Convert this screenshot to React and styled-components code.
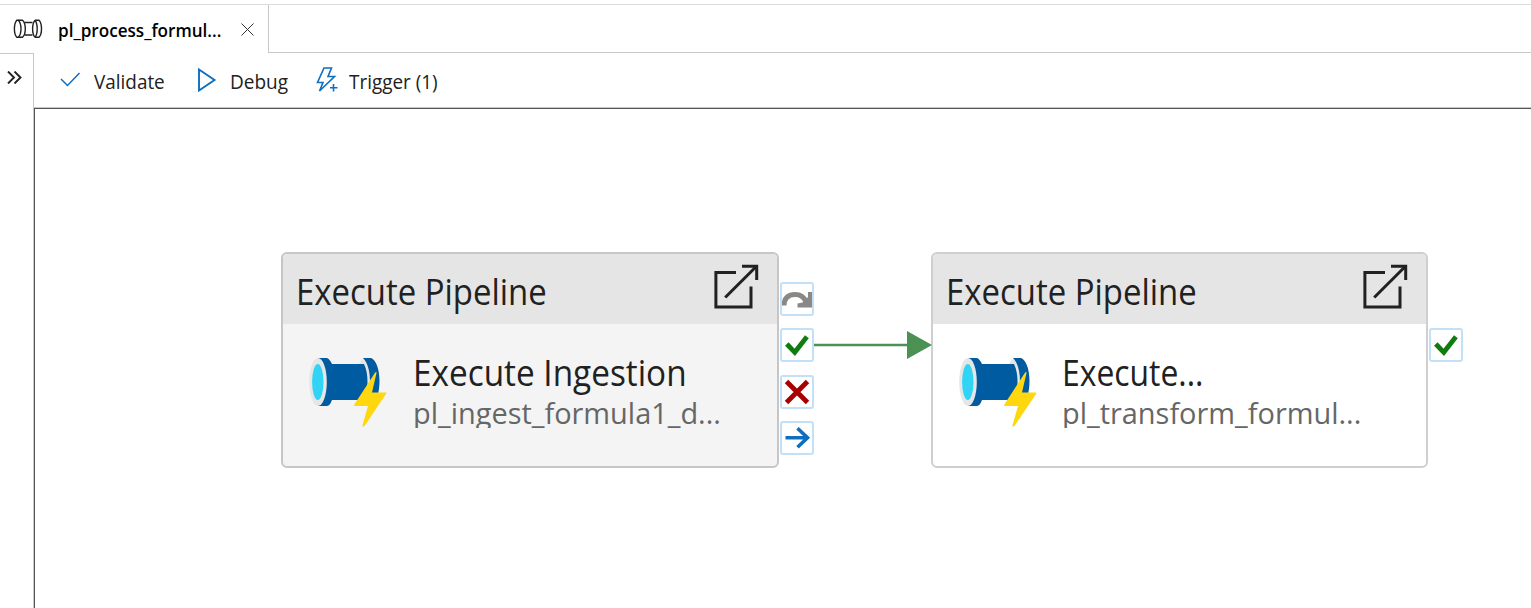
import React from 'react';
import styled, { createGlobalStyle } from 'styled-components';

const Global = createGlobalStyle`
  *, *::before, *::after { box-sizing: border-box; }
  body { margin: 0; background: #fff; overflow: hidden; }
  svg { display: block; }
`;

const Shell = styled.div`
  display: flex;
  flex-direction: column;
  width: 100%;
  height: 608px;
  padding-top: 4px;
  background: #fff;
  color: #212121;
  font-family: 'Open Sans', 'Noto Sans', sans-serif;
`;

const TabBar = styled.div`
  display: flex;
  flex: none;
  height: 49px;
  border-top: 1px solid #dcdcdc;
`;

const Tab = styled.div`
  display: flex;
  align-items: center;
  width: 269px;
  padding-left: 13px;
  border-right: 1px solid #c8c8c8;
`;

const TabFill = styled.div`
  flex: 1;
  border-bottom: 1px solid #c8c8c8;
`;

const Label = styled.span`
  display: block;
  white-space: nowrap;
  font-size: ${(p) => p.$size}px;
  line-height: ${(p) => p.$line || p.$size * 1.3}px;
  font-weight: ${(p) => p.$weight || 400};
  color: ${(p) => p.$color || '#212121'};
  transform: scaleX(${(p) => p.$condense || 1});
  transform-origin: left center;
`;

const Workspace = styled.div`
  display: flex;
  flex: 1;
  min-height: 0;
`;

const Rail = styled.div`
  width: 34px;
  padding: 17px 0 0 7px;
  border-top: 1px solid #c8c8c8;
  border-right: 1px solid #c8c8c8;
`;

const Editor = styled.div`
  display: flex;
  flex: 1;
  flex-direction: column;
  min-width: 0;
`;

const Toolbar = styled.div`
  display: flex;
  flex: none;
  height: 55px;
  padding-left: 26px;
  padding-bottom: 1px;
  align-items: center;
  border-bottom: 1px solid #c8c8c8;
`;

const Command = styled.div`
  display: flex;
  align-items: center;
  width: ${(p) => p.$width}px;
`;

const CommandIcon = styled.div`
  width: ${(p) => p.$width}px;
`;

const CommandText = styled.div`
  padding-top: 5px;
`;

const Canvas = styled.div`
  position: relative;
  flex: 1;
  border-left: 1px solid #555;
  border-top: 1px solid #555;
  overflow: hidden;
`;

const Node = styled.div`
  position: absolute;
  left: ${(p) => p.$x}px;
  top: 143px;
  width: 497.5px;
  height: 216px;
  display: flex;
  flex-direction: column;
  border: 2px solid ${(p) => (p.$selected ? '#c6c6c6' : '#cfcfcf')};
  border-radius: 6px;
  background: ${(p) => (p.$selected ? '#f4f4f4' : '#fff')};
  overflow: hidden;
`;

const NodeHeader = styled.div`
  display: flex;
  justify-content: space-between;
  flex: none;
  height: 70px;
  padding: 10px 18px 0 13px;
  background: #e5e5e5;
`;

const HeaderText = styled.div`
  padding-top: 2px;
`;

const NodeBody = styled.div`
  display: flex;
  padding: 21px 0 0 17px;
`;

const NodeText = styled.div`
  padding: 5px 0 0 24.5px;
`;

const Clip = styled.div`
  width: 330px;
  height: 32px;
  overflow: hidden;
`;

const Ports = styled.div`
  position: absolute;
  left: ${(p) => p.$x}px;
  top: ${(p) => p.$y}px;
  display: flex;
  flex-direction: column;
  gap: 12.3px;
`;

const Port = styled.div`
  width: 34px;
  height: 34px;
  border: 2px solid #c2e0f8;
  border-radius: 3px;
  background: #fff;
`;

const Link = styled.svg`
  position: absolute;
  left: 778px;
  top: 221px;
`;

const PortIcon = ({ kind }) => (
  <svg width="30" height="30" viewBox="2 2 30 30" fill="none">
    {kind === 'skip' && (
      <>
        <path d="M4 23.500C4 15.500 9 12.500 15 12.500C21 12.500 24.500 16 26 20" stroke="#8a8886" strokeWidth="5" />
        <path d="M32.500 10V25.500H17.500V21.500L22.500 20.500L28 15V10Z" fill="#8a8886" />
      </>
    )}
    {kind === 'success' && <path d="M6.800 16L14.800 24.300L26.900 8.800" stroke="#107c10" strokeWidth="4.800" />}
    {kind === 'failure' && <path d="M6.500 6.500L27.500 27.500M27.500 6.500L6.500 27.500" stroke="#a80000" strokeWidth="4.800" />}
    {kind === 'completion' && (
      <path d="M5.500 16.700H28M17.500 7.200L27.500 16.700L17.500 26.200" stroke="#106ebe" strokeWidth="3.600" />
    )}
  </svg>
);

const PipelineArt = () => (
  <svg width="88" height="90" viewBox="0 0 88 90">
    <ellipse cx="65" cy="37" rx="9" ry="24" fill="#e6e6e6" />
    <path d="M63 13H71C76 15 79.500 24 79.500 36S76 60 71 61H63C68 55 70 47 70 37S68 18 63 13Z" fill="#005ba1" />
    <path d="M18 13H27C29.500 14 31 17 32 19H64C66.500 24 67.500 30 67.500 37S66.500 50 64 55H32C31 58 29 61 27 61H18Z" fill="#005ba1" />
    <ellipse cx="18" cy="37" rx="8.800" ry="24" fill="#e6e6e6" />
    <ellipse cx="17.800" cy="37" rx="5.700" ry="18" fill="#32d4f5" />
    <path d="M76.500 28L72 47.500H85.500Q87 47.500 86.200 48.700L64.500 81Q62 82.500 62.500 80L68 61H55Q53.500 61 54.300 59.500L74.500 28.500Q76.500 26 76.500 28Z" fill="#ffd70f" />
  </svg>
);

const OpenIcon = () => (
  <svg width="46" height="46" viewBox="0 0 46 46" fill="none" stroke="#212121" strokeWidth="3">
    <path d="M23 8.500H2.900V43H38V22.500" />
    <path d="M12.200 33.500L43 2.700" />
    <path d="M29 2.300H43.700V16" />
  </svg>
);

const PipelineTabIcon = () => (
  <svg width="30" height="20" viewBox="0 0 30 20" fill="none" stroke="#212121" strokeWidth="1.400">
    <path d="M3.800 1.200H5.200C7.200 3 8 6 8 9.700S7.200 16.500 5.200 18.200H3.800C2.200 16.500 1.400 13.500 1.400 9.700S2.200 3 3.800 1.200Z" />
    <path d="M5 1.200H9.500C11.500 3 12.300 6 12.300 9.700S11.500 16.500 9.500 18.200H5" />
    <path d="M11.500 3.500H19.500M11.500 16H19.500" />
    <path d="M22 1.200C20.400 3 19.600 6 19.600 9.700S20.400 16.500 22 18.200" />
    <path d="M22 1.200C23.500 3 24.200 6 24.200 9.700S23.500 16.500 22 18.200" />
    <path d="M22 1.200H26C27.800 3 28.500 6 28.500 9.700S27.800 16.500 26 18.200H22" />
  </svg>
);

const TabIconSlot = styled.div`
  width: 45px;
`;

const TabLabelSlot = styled.div`
  width: 182.5px;
  padding-top: 4px;
`;

function Activity({ x, name, pipeline, selected, nameCondense }) {
  return (
    <Node $x={x} $selected={selected}>
      <NodeHeader>
        <HeaderText>
          <Label $size={36} $line={52} $condense={0.914}>Execute Pipeline</Label>
        </HeaderText>
        <OpenIcon />
      </NodeHeader>
      <NodeBody>
        <PipelineArt />
        <NodeText>
          <Label $size={36} $line={46} $condense={nameCondense}>{name}</Label>
          <Clip>
            <Label $size={30} $line={34} $condense={0.964} $color="#666">{pipeline}</Label>
          </Clip>
        </NodeText>
      </NodeBody>
    </Node>
  );
}

export default function App() {
  return (
    <>
      <Global />
      <Shell>
        <TabBar>
          <Tab>
            <TabIconSlot><PipelineTabIcon /></TabIconSlot>
            <TabLabelSlot>
              <Label $size={18} $weight={600} $color="#000" $condense={0.95}>pl_process_formul...</Label>
            </TabLabelSlot>
            <svg width="13" height="13" viewBox="0 0 13 13" stroke="#333" fill="none">
              <path d="M0.500 0.500L12.500 12.500M12.500 0.500L0.500 12.500" />
            </svg>
          </Tab>
          <TabFill />
        </TabBar>
        <Workspace>
          <Rail>
            <svg width="15" height="13" viewBox="0 0 15 13" fill="none" stroke="#212121" strokeWidth="1.900">
              <path d="M1 0.500L7 6.500L1 12.500M7.500 0.500L13.500 6.500L7.500 12.500" />
            </svg>
          </Rail>
          <Editor>
            <Toolbar>
              <Command $width={136.5}>
                <CommandIcon $width={34}>
                  <svg width="21" height="16" viewBox="0 0 21 16" fill="none" stroke="#106ebe" strokeWidth="1.500">
                    <path d="M1 7L7.500 13.500L19.500 1" />
                  </svg>
                </CommandIcon>
                <CommandText><Label $size={20} $condense={0.945}>Validate</Label></CommandText>
              </Command>
              <Command $width={119}>
                <CommandIcon $width={33.5}>
                  <svg width="20" height="25" viewBox="0 0 20 25" fill="none" stroke="#106ebe" strokeWidth="1.900">
                    <path d="M2 2.500L17.500 13L2 23.500Z" />
                  </svg>
                </CommandIcon>
                <CommandText><Label $size={20} $condense={0.95}>Debug</Label></CommandText>
              </Command>
              <Command $width={130}>
                <CommandIcon $width={33.5}>
                  <svg width="24" height="28" viewBox="0 0 24 28" fill="none" stroke="#106ebe" strokeWidth="1.600">
                    <path d="M8 2H15.500L12 10.500H18.500L3.500 25L7 16.500H1.500Z" />
                    <path d="M17.500 18V25.500M14 21.800H21.500" />
                  </svg>
                </CommandIcon>
                <CommandText><Label $size={20} $condense={0.945}>Trigger (1)</Label></CommandText>
              </Command>
            </Toolbar>
            <Canvas>
              <Activity x={246.3} selected name="Execute Ingestion" nameCondense={0.926} pipeline="pl_ingest_formula1_d..." />
              <Activity x={895.5} name="Execute..." nameCondense={0.885} pipeline="pl_transform_formul..." />
              <Link width="120" height="30" viewBox="0 0 120 30">
                <path d="M0 15H96" stroke="#4a9153" strokeWidth="2.600" />
                <path d="M94 1L119 15L94 29Z" fill="#4a9153" />
              </Link>
              <Ports $x={745} $y={173}>
                {['skip', 'success', 'failure', 'completion'].map((kind) => (
                  <Port key={kind}><PortIcon kind={kind} /></Port>
                ))}
              </Ports>
              <Ports $x={1394} $y={219.3}>
                <Port><PortIcon kind="success" /></Port>
              </Ports>
            </Canvas>
          </Editor>
        </Workspace>
      </Shell>
    </>
  );
}
